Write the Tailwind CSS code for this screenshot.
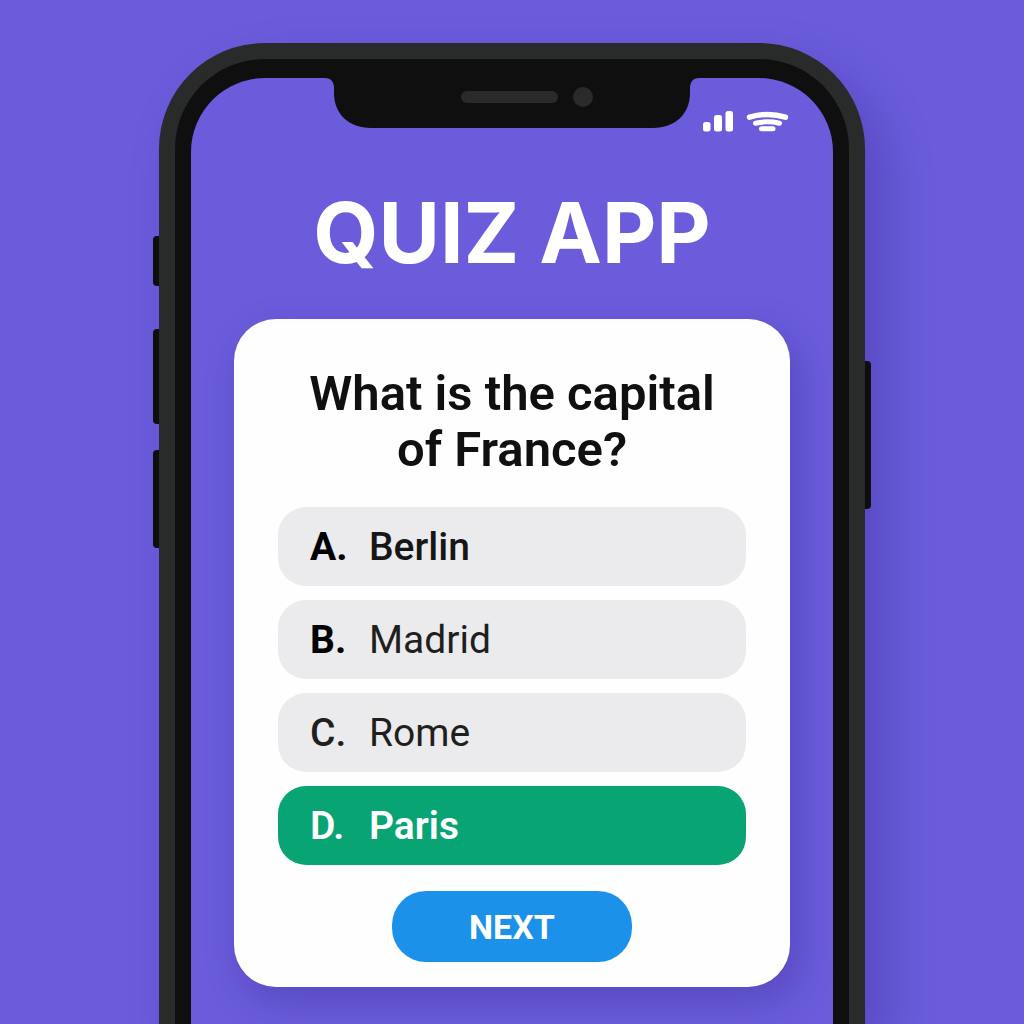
<!DOCTYPE html>
<html lang="en">
<head>
<meta charset="utf-8">
<meta name="viewport" content="width=device-width, initial-scale=1">
<title>Quiz App</title>
<script src="https://cdn.jsdelivr.net/npm/@tailwindcss/browser@4"></script>
</head>
<body class="flex h-screen flex-col overflow-hidden bg-[#6a5cdb] px-4 pt-[43px] font-['Roboto',sans-serif]">
  <div class="relative mx-auto flex w-full max-w-[706px] grow flex-col rounded-t-[106px] bg-[#292a2a] px-4 pt-4 shadow-[20px_24px_48px_rgba(30,20,110,0.25)]">
    <!-- side buttons -->
    <span class="absolute top-[193px] -left-[6px] h-[50px] w-[6px] rounded-l-[4px] bg-[#0e0e0f]"></span>
    <span class="absolute top-[286px] -left-[6px] h-[95px] w-[6px] rounded-l-[4px] bg-[#0e0e0f]"></span>
    <span class="absolute top-[407px] -left-[6px] h-[98px] w-[6px] rounded-l-[4px] bg-[#0e0e0f]"></span>
    <span class="absolute top-[318px] -right-[6px] h-[148px] w-[6px] rounded-r-[4px] bg-[#0e0e0f]"></span>

    <div class="flex grow flex-col rounded-t-[90px] bg-[#0f0f10] px-4 pt-[19px]">
      <main class="relative flex grow flex-col items-center rounded-t-[74px] bg-[#6a5cdb] px-[43px]">
        <!-- notch -->
        <svg class="absolute -top-px left-1/2 h-[51px] w-[374px] -translate-x-1/2" viewBox="0 0 374 51" aria-hidden="true">
          <path fill="#0f0f10" d="M0 0H374V1C368 1 365 5 365 11V16C365 37 350 51 328 51H46C24 51 9 37 9 16V11C9 5 6 1 0 1Z"/>
          <rect x="136" y="14" width="97" height="12" rx="6" fill="#292a2b"/>
          <circle cx="258" cy="20" r="10" fill="#292a2b"/>
        </svg>

        <header class="flex h-[54px] w-full items-end justify-end gap-3">
          <svg class="h-[21px] w-[31px]" viewBox="0 0 31 21" fill="#fff" role="img" aria-label="Signal">
            <rect x="0" y="11" width="7.500" height="9.500" rx="2.500"/>
            <rect x="11" y="4" width="8" height="16.500" rx="2.500"/>
            <rect x="22.500" y="0" width="7.500" height="20.500" rx="2.500"/>
          </svg>
          <svg class="h-[21px] w-[44px]" viewBox="0 0 44 21" fill="none" stroke="#fff" stroke-width="5" stroke-linecap="round" role="img" aria-label="Wi-Fi">
            <path stroke-width="5.500" d="M3.500 6.200Q21.500 0.800 39.500 6.200"/>
            <path d="M9.500 12.200Q21.500 9.400 33.500 12.200"/>
            <path d="M15.500 17.800H27"/>
          </svg>
        </header>

        <h1 class="mt-[49px] text-center font-['Inter',sans-serif] text-[84px] leading-[104px] font-bold text-white">QUIZ APP</h1>

        <form class="mt-[34px] flex w-full flex-col items-center rounded-[42px] bg-[#fefefe] px-[44px] pt-[47px] pb-[25px] shadow-[8px_14px_36px_rgba(30,20,110,0.25)]" onsubmit="return false">
          <h2 class="text-center text-[49px] leading-[56px] font-semibold whitespace-nowrap text-[#101010]">What is the capital<br>of France?</h2>

          <div class="mt-[29px] flex w-full flex-col gap-[14px] text-[39px] leading-[48px]">
            <button type="button" class="flex h-[79px] items-center rounded-[28px] bg-[#ebebed] px-8 text-left text-[#161616]"><span class="w-[59px] font-bold text-black">A.</span><span class="font-medium">Berlin</span></button>
            <button type="button" class="flex h-[79px] items-center rounded-[28px] bg-[#ebebed] px-8 text-left text-[#1f1f20]"><span class="w-[59px] font-bold text-black">B.</span><span>Madrid</span></button>
            <button type="button" class="flex h-[79px] items-center rounded-[28px] bg-[#ebebed] px-8 text-left text-[#1f1f20]"><span class="w-[59px] font-medium">C.</span><span>Rome</span></button>
            <button type="button" class="flex h-[79px] items-center rounded-[28px] bg-[#08a474] px-8 text-left text-white"><span class="w-[59px] font-semibold">D.</span><span class="font-semibold">Paris</span></button>
          </div>

          <button type="submit" class="mt-[26px] h-[71px] w-[240px] rounded-[34px] bg-[#1b91e9] text-[34px] leading-[40px] font-bold text-white">NEXT</button>
        </form>
      </main>
    </div>
  </div>
</body>
</html>
